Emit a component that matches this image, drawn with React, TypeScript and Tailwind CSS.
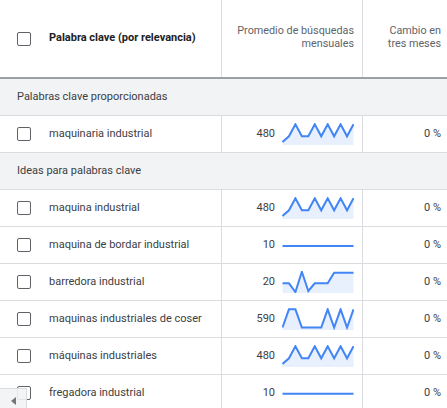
import React from 'react'

type Row = {
  keyword: string
  avg: string
  trend: number[] | number
  change: string
}

// y values in svg units (0 top .. 22 bottom)
const trend480 = [19, 13.3, 1.3, 13.3, 13.3, 1.3, 13.3, 1.3, 13.3, 1.3, 13.3, 1.3]
const trend20 = [12.3, 12.3, 21, 0.8, 20, 12.3, 12.3, 12.3, 1.7, 1.7, 1.7, 1.7]
const trend590 = [19.5, 1.3, 1.3, 19.5, 19.5, 19.5, 19.5, 1.3, 19.5, 1.3, 19.5, 1.3]

const provided: Row[] = [
  { keyword: 'maquinaria industrial', avg: '480', trend: trend480, change: '0 %' }
]

const ideas: Row[] = [
  { keyword: 'maquina industrial', avg: '480', trend: trend480, change: '0 %' },
  { keyword: 'maquina de bordar industrial', avg: '10', trend: 12, change: '0 %' },
  { keyword: 'barredora industrial', avg: '20', trend: trend20, change: '0 %' },
  { keyword: 'maquinas industriales de coser', avg: '590', trend: trend590, change: '0 %' },
  { keyword: 'máquinas industriales', avg: '480', trend: trend480, change: '0 %' },
  { keyword: 'fregadora industrial', avg: '10', trend: 11.7, change: '0 %' }
]

function Sparkline({ trend }: { trend: number[] | number }) {
  const w = 72
  const h = 22
  if (typeof trend === 'number') {
    return (
      <svg width={w} height={h} viewBox={`0 0 ${w} ${h}`} className="shrink-0">
        <line x1="0.5" y1={trend} x2="71.5" y2={trend} stroke="#4285f4" strokeWidth="2" />
      </svg>
    )
  }
  const step = 71 / (trend.length - 1)
  const pts = trend.map((y, i) => `${(0.5 + i * step).toFixed(2)},${y}`)
  const area = [...pts, `71.5,${h}`, `0.5,${h}`].join(' ')
  return (
    <svg width={w} height={h} viewBox={`0 0 ${w} ${h}`} className="shrink-0">
      <polygon points={area} fill="#e8f0fe" />
      <polyline
        points={pts.join(' ')}
        fill="none"
        stroke="#4285f4"
        strokeWidth="2"
        strokeLinejoin="miter"
      />
    </svg>
  )
}

function Checkbox() {
  return <div className="w-[14px] h-[14px] shrink-0 rounded-[2px] border-[1.5px] border-[#5f6368] bg-white" />
}

function KeywordRow({ row }: { row: Row }) {
  return (
    <div className="grid grid-cols-[221px_141px_1fr] h-[37px] border-b border-[#dadce0]">
      <div className="flex items-center pl-[17px] gap-[18px]">
        <Checkbox />
        <span className="text-[#3c4043] whitespace-nowrap">{row.keyword}</span>
      </div>
      <div className="flex items-center justify-end gap-[7px] pr-[8px] border-l border-[#dadce0]">
        <span className="text-[#3c4043]">{row.avg}</span>
        <Sparkline trend={row.trend} />
      </div>
      <div className="flex items-center justify-end pr-[6px] border-l border-[#dadce0]">
        <span className="text-[#3c4043]">{row.change}</span>
      </div>
    </div>
  )
}

function SectionRow({ title }: { title: string }) {
  return (
    <div className="h-[37px] flex items-center pl-[17px] bg-[#f1f3f4] border-b border-[#dadce0] text-[#3c4043]">
      {title}
    </div>
  )
}

export default function App() {
  return (
    <div className="relative w-[447px] h-[408px] overflow-hidden bg-white font-[Roboto,sans-serif] text-[11px]">
      {/* Header */}
      <div className="grid grid-cols-[221px_141px_1fr] h-[79px] border-b-2 border-[#9aa0a6]">
        <div className="flex items-center pl-[17px] gap-[18px]">
          <Checkbox />
          <span className="font-bold text-[#202124] whitespace-nowrap">Palabra clave (por relevancia)</span>
        </div>
        <div className="flex items-center justify-end pr-[8px] pb-[3px] border-l border-[#dadce0] text-right text-[10.8px] text-[#5f6368] leading-[13px]">
          <span>
            Promedio de búsquedas
            <br />
            mensuales
          </span>
        </div>
        <div className="flex items-center justify-end pr-[6px] pb-[3px] border-l border-[#dadce0] text-right text-[10.8px] text-[#5f6368] leading-[13px]">
          <span>
            Cambio en
            <br />
            tres meses
          </span>
        </div>
      </div>

      <SectionRow title="Palabras clave proporcionadas" />
      {provided.map((r) => (
        <KeywordRow key={r.keyword} row={r} />
      ))}

      <SectionRow title="Ideas para palabras clave" />
      {ideas.map((r) => (
        <KeywordRow key={r.keyword} row={r} />
      ))}

      {/* horizontal scroll button */}
      <div className="absolute left-0 bottom-0 w-[27px] h-[20px] bg-[#f1f3f4]/90 border-t border-r border-[#dadce0] flex items-center justify-center">
        <div className="w-0 h-0 border-y-[4px] border-y-transparent border-r-[5px] border-r-[#757575] mt-[4px]" />
      </div>
    </div>
  )
}
